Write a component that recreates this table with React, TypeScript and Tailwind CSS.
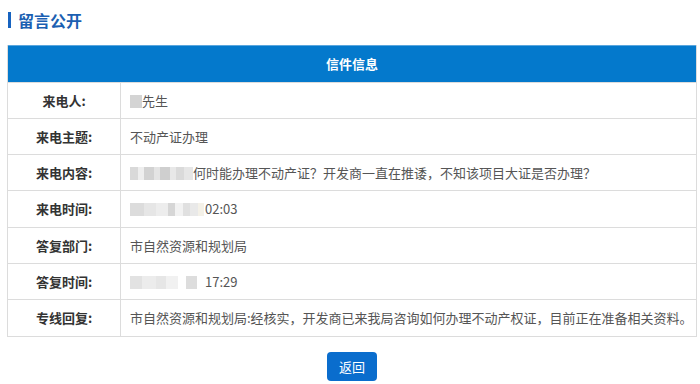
import React from "react";

type Seg = { w: number; c: string };

// Masked personal data: a row of soft grey tiles
function Masked({ segs }: { segs: Seg[] }) {
  return (
    <span className="inline-flex h-[13px] items-stretch align-[-2px] blur-[0.6px]">
      {segs.map((s, i) => (
        <span key={i} style={{ width: s.w, background: s.c }} />
      ))}
    </span>
  );
}

type Row = { label: string; h: number; value: React.ReactNode };

const rows: Row[] = [
  {
    label: "来电人:",
    h: 35,
    value: (
      <>
        <Masked segs={[{ w: 12, c: "#d4d4d4" }]} />
        先生
      </>
    ),
  },
  { label: "来电主题:", h: 35, value: "不动产证办理" },
  {
    label: "来电内容:",
    h: 35,
    value: (
      <>
        <Masked
          segs={[
            { w: 8, c: "#d9d9d9" },
            { w: 6, c: "#eeeeee" },
            { w: 10, c: "#d2d2d2" },
            { w: 6, c: "#e4e4e4" },
            { w: 10, c: "#cfcfcf" },
            { w: 6, c: "#e8e8e8" },
            { w: 8, c: "#dadada" },
            { w: 9, c: "#e6e6e6" },
          ]}
        />
        何时能办理不动产证？开发商一直在推诿，不知该项目大证是否办理？
      </>
    ),
  },
  {
    label: "来电时间:",
    h: 36,
    value: (
      <>
        <Masked
          segs={[
            { w: 14, c: "#dcdcdc" },
            { w: 12, c: "#e6e6e6" },
            { w: 12, c: "#ededed" },
            { w: 7, c: "#d6d6d6" },
            { w: 8, c: "#f2f2f2" },
            { w: 7, c: "#e0e0e0" },
            { w: 8, c: "#e9e9e9" },
            { w: 6, c: "#f4f1e8" },
          ]}
        />
        <span className="ml-[1px]">02:03</span>
      </>
    ),
  },
  { label: "答复部门:", h: 35, value: "市自然资源和规划局" },
  {
    label: "答复时间:",
    h: 35,
    value: (
      <>
        <Masked
          segs={[
            { w: 12, c: "#e2e2e2" },
            { w: 14, c: "#ececec" },
            { w: 10, c: "#e6e6e6" },
            { w: 12, c: "#f1f1f1" },
            { w: 8, c: "#ffffff" },
            { w: 11, c: "#dddddd" },
            { w: 4, c: "#ffffff" },
          ]}
        />
        <span className="ml-[4px]">17:29</span>
      </>
    ),
  },
  {
    label: "专线回复:",
    h: 36,
    value: "市自然资源和规划局:经核实，开发商已来我局咨询如何办理不动产权证，目前正在准备相关资料。",
  },
];

export default function App() {
  return (
    <div
      className="h-[384px] w-[700px] overflow-hidden bg-white"
      style={{ fontFamily: '"Noto Sans CJK SC", "Liberation Sans", sans-serif' }}
    >
      <div className="flex h-[45px] items-start pl-[8px] pt-[10px]">
        <div className="mt-[2px] h-[16px] w-[3px] bg-[#1763c0]" />
        <h1 className="ml-[7px] text-[16px] font-bold leading-[20px] text-[#1b5fb2]">
          留言公开
        </h1>
      </div>

      <div className="ml-[7px] w-[690px] border-x border-b border-[#dcdcdc]">
        <div className="flex h-[37px] items-center justify-center border-t border-[#5aa6dd] bg-[#0479cc] text-[13px] font-bold text-white">
          信件信息
        </div>
        {rows.map((r) => (
          <div
            key={r.label}
            className="flex border-t border-[#dcdcdc] text-[13px]"
            style={{ height: r.h + 1 }}
          >
            <div className="flex w-[113px] shrink-0 items-center justify-center border-r border-[#dcdcdc] font-bold text-[#333333]">
              {r.label}
            </div>
            <div className="flex min-w-0 flex-1 items-center whitespace-nowrap pl-[9px] text-[#555555]">
              <span>{r.value}</span>
            </div>
          </div>
        ))}
      </div>

      <div className="mt-[15px] flex justify-center">
        <button className="ml-[4px] h-[29px] w-[50px] rounded-[4px] bg-[#0a6dcd] text-[13px] text-white">
          返回
        </button>
      </div>
    </div>
  );
}
